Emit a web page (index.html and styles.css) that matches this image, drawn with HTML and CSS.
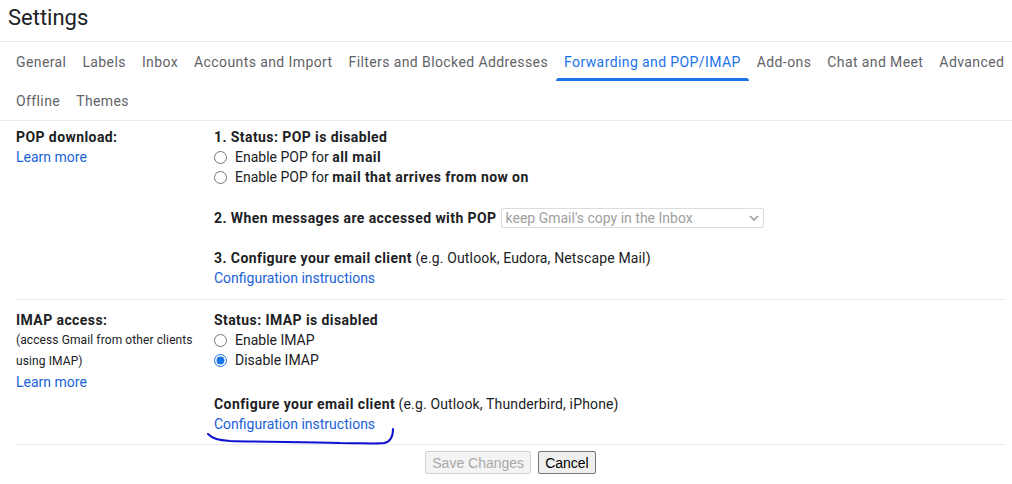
FILE: index.html
```html
<!DOCTYPE html>
<html lang="en">
<head>
<meta charset="utf-8">
<title>Settings</title>
<link rel="stylesheet" href="styles.css">
</head>
<body>
<header class="title">Settings</header>
<nav class="tabs">
  <div class="tab-row">
    <a class="tab">General</a>
    <a class="tab">Labels</a>
    <a class="tab">Inbox</a>
    <a class="tab">Accounts and Import</a>
    <a class="tab">Filters and Blocked Addresses</a>
    <a class="tab active">Forwarding and POP/IMAP</a>
    <a class="tab">Add-ons</a>
    <a class="tab">Chat and Meet</a>
    <a class="tab">Advanced</a>
  </div>
  <div class="tab-row">
    <a class="tab">Offline</a>
    <a class="tab">Themes</a>
  </div>
</nav>

<section class="setting pop">
  <div class="label-col">
    <div class="row"><b>POP download:</b></div>
    <div class="row"><a class="link">Learn more</a></div>
  </div>
  <div class="value-col">
    <div class="row"><b>1. Status: POP is disabled</b></div>
    <label class="row option"><input type="radio" name="pop"><span>Enable POP for <b>all mail</b></span></label>
    <label class="row option"><input type="radio" name="pop"><span>Enable POP for <b>mail that arrives from now on</b></span></label>
    <div class="row when">
      <b>2. When messages are accessed with POP</b>
      <span class="select-wrap">
        <select class="select" disabled><option>keep Gmail's copy in the Inbox</option></select>
        <svg class="chev" width="10" height="6" viewBox="0 0 10 6"><path d="M1 1l4 4 4-4" fill="none" stroke="#9a9a9a" stroke-width="1.6"/></svg>
      </span>
    </div>
    <div class="row gap20"><b>3. Configure your email client</b> <span class="note">(e.g. Outlook, Eudora, Netscape Mail)</span></div>
    <div class="row"><a class="link">Configuration instructions</a></div>
  </div>
</section>

<section class="setting imap">
  <div class="label-col">
    <div class="row"><b>IMAP access:</b></div>
    <div class="small">(access Gmail from other clients</div>
    <div class="small">using IMAP)</div>
    <div class="row"><a class="link">Learn more</a></div>
  </div>
  <div class="value-col">
    <div class="row"><b>Status: IMAP is disabled</b></div>
    <label class="row option"><input type="radio" name="imap"><span>Enable IMAP</span></label>
    <label class="row option"><input type="radio" name="imap" checked><span>Disable IMAP</span></label>
    <div class="row gap24"><b>Configure your email client</b> <span class="note">(e.g. Outlook, Thunderbird, iPhone)</span></div>
    <div class="row"><a class="link">Configuration instructions</a></div>
  </div>
</section>

<div class="actions">
  <button class="btn" disabled>Save Changes</button>
  <button class="btn">Cancel</button>
</div>

<svg class="scribble" width="1012" height="484" viewBox="0 0 1012 484">
  <path d="M208 434 C213 439 218 440 230 441 C260 442 300 442 340 443 C360 443 375 444 384 443 C390 442 393 437 393 429" fill="none" stroke="#1010d2" stroke-width="2" stroke-linecap="round"/>
</svg>
</body>
</html>
```

FILE: styles.css
```css
* { box-sizing: border-box; }

body {
  margin: 0;
  font-family: Roboto, "Noto Sans", Arial, sans-serif;
  font-size: 14px;
  color: #202124;
  background: #fff;
  position: relative;
  width: 1012px;
  height: 484px;
  overflow: hidden;
}

b {
  font-weight: 700;
  letter-spacing: 0.42px;
}

.note { letter-spacing: 0.15px; }

.title {
  padding: 4px 8px 9px;
  font-size: 22px;
  line-height: 28px;
  font-weight: 400;
  color: #202124;
  border-bottom: 1px solid #e8eaed;
}

.tabs {
  border-bottom: 1px solid #e8eaed;
  padding-left: 8px;
}

.tab-row {
  display: flex;
  height: 39px;
}

.tab {
  display: flex;
  align-items: center;
  padding: 0 8px;
  color: #5f6368;
  white-space: nowrap;
  letter-spacing: 0.4px;
  position: relative;
}

.tab.active {
  color: #1a73e8;
}

.tab.active::after {
  content: "";
  position: absolute;
  left: 0;
  right: 0;
  bottom: 0;
  height: 3px;
  background: #1a73e8;
  border-radius: 3px 3px 0 0;
}

.setting {
  display: grid;
  grid-template-columns: 198px 1fr;
  margin: 0 7px 0 16px;
  border-bottom: 1px solid #e8eaed;
}

.pop { padding: 6px 0 11px; }
.imap { padding: 10px 0 10px; }

.row {
  line-height: 20px;
  height: 20px;
  white-space: nowrap;
}

.small {
  font-size: 12px;
  line-height: 21px;
  color: #202124;
  letter-spacing: 0.1px;
}

.link {
  color: #1a62d8;
  text-decoration: none;
}

.option {
  display: flex;
  align-items: center;
  gap: 8px;
}

.option input {
  margin: 0;
  width: 13px;
  height: 13px;
  accent-color: #1a73e8;
}

.when {
  margin-top: 21px;
  display: flex;
  align-items: center;
  gap: 4px;
}

.select-wrap {
  position: relative;
  display: inline-block;
  width: 263px;
  height: 20px;
}

.select {
  appearance: none;
  -webkit-appearance: none;
  width: 100%;
  height: 20px;
  margin: 0;
  padding: 0 0 0 4px;
  border: 1px solid #dcdcdc;
  border-radius: 2px;
  background: #fff;
  font-family: Roboto, "Noto Sans", Arial, sans-serif;
  font-size: 14px;
  color: #a0a0a0;
  line-height: 18px;
  opacity: 1;
}

.chev {
  position: absolute;
  right: 5px;
  top: 7px;
}

.gap20 { margin-top: 20px; }
.gap24 { margin-top: 24px; }

.actions {
  margin: 0 7px 0 16px;
  padding-top: 6px;
  display: flex;
  justify-content: center;
  gap: 7px;
}

.btn {
  font-family: "Liberation Sans", Arial, sans-serif;
  font-size: 14px;
  line-height: 16px;
  height: 23px;
  padding: 2px 6px;
  border: 1px solid #767676;
  border-radius: 2px;
  background: #efefef;
  color: #000;
}

.btn:disabled {
  border-color: #d0d0d0;
  background: #f4f4f4;
  color: #a8a8a8;
}

.scribble {
  position: absolute;
  left: 0;
  top: 0;
  pointer-events: none;
}
```
